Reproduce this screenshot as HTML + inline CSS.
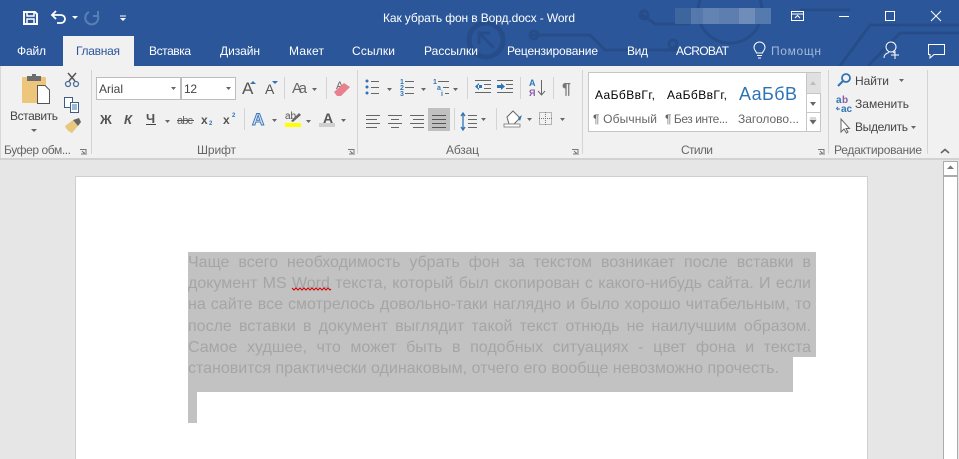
<!DOCTYPE html>
<html lang="ru"><head><meta charset="utf-8"><title>Word</title>
<style>
html,body{margin:0;padding:0;background:#e6e6e6}
#w{position:relative;width:959px;height:459px;overflow:hidden;background:#e6e6e6}
svg{position:absolute;left:0;top:0}
svg text{font-family:"Liberation Sans","Noto Sans CJK SC",sans-serif}
.t{font-size:12px;fill:#fff}
.r{font-size:12px;fill:#444}
.g{font-size:12px;fill:#666}
.d{position:absolute;left:188px;width:623px;height:21px;font:16px/21px "Liberation Sans",sans-serif;color:#a5a5a5;text-align:justify;text-align-last:justify;white-space:nowrap}
.sel{position:absolute;background:#c2c2c2}
</style></head><body><div id="w">
<svg width="959" height="459" viewBox="0 0 959 459">
<rect width="959" height="66" fill="#2b579a"/>
<g fill="none" stroke="#264d8a" stroke-width="3">
<circle cx="486" cy="40" r="17" stroke-width="5"/><path d="M494 48L480 34M479 44V33H490"/>
<path d="M530 35H590L605 50H680M640 13L655 24H690M700 0a32 32 0 1 0 60 0"/><circle cx="534" cy="35" r="4"/><circle cx="673" cy="44" r="4"/><circle cx="644" cy="15" r="4"/>
<path d="M840 66L870 25H959M868 66L900 33H959M800 10H850"/>
</g>
<rect x="63" y="36" width="71" height="30" fill="#f1f1f1"/>
<rect y="66" width="959" height="92" fill="#f1f1f1"/>
<rect y="158" width="959" height="2" fill="#d2d2d2"/>
<rect x="0" y="66" width="1" height="92" fill="#d8d8d8"/>
<!-- QAT -->
<g fill="none" stroke="#fff" stroke-width="2"><path d="M24 12H35L37 14V24H24Z"/><path d="M27 12V16H34V12M27 24V19H34V24" stroke-width="1.5"/>
<path d="M53 15H61A4 4 0 0 1 61 23H57M56 11L52 15L56 19" stroke-width="1.8"/>
<path d="M89 12A6.5 6.5 0 1 0 98 16M98 11V16H93" stroke="#5a7fb6" stroke-width="2"/>
<path d="M120 16H126" stroke-width="1"/></g>
<path d="M72 16H78L75 19ZM120 18H126L123 21Z" fill="#fff"/>
<text x="383" y="22" class="t" textLength="192" font-size="13">Как убрать фон в Ворд.docx - Word</text>
<rect x="675" y="8" width="16" height="16" fill="#3d669f"/><rect x="691" y="8" width="16" height="16" fill="#5a7dae" opacity=".9"/><rect x="703" y="8" width="64" height="16" fill="#5d7fb0"/><rect x="739" y="8" width="16" height="16" fill="#6f8db8"/>
<rect x="703" y="8" width="16" height="16" fill="#6383b2"/><rect x="755" y="8" width="16" height="16" fill="#557aad"/>
<!-- window controls -->
<g fill="none" stroke="#fff" stroke-width="1"><rect x="791.500" y="11.500" width="12" height="9"/><path d="M791 14H804M795 18L797.500 15.500L800 18"/><path d="M839 16.500H849"/><rect x="885.500" y="11.500" width="9" height="9"/><path d="M931 11L941 21M941 11L931 21"/></g>
<!-- tabs -->
<g class="tabs">
<text x="17" y="55" class="t" textLength="29">Файл</text>
<text x="76" y="55" font-size="12" fill="#2b579a" textLength="44">Главная</text>
<text x="149" y="55" class="t" textLength="42">Вставка</text>
<text x="220" y="55" class="t" textLength="40">Дизайн</text>
<text x="289" y="55" class="t" textLength="35">Макет</text>
<text x="352" y="55" class="t" textLength="43">Ссылки</text>
<text x="424" y="55" class="t" textLength="54">Рассылки</text>
<text x="507" y="55" class="t" textLength="91">Рецензирование</text>
<text x="627" y="55" class="t" textLength="21">Вид</text>
<text x="676" y="55" class="t" textLength="53">ACROBAT</text>
<text x="771" y="55" font-size="12" fill="#a5bad8" textLength="50">Помощн</text>
</g>
<g fill="none" stroke="#fff" stroke-width="1"><path d="M757 55.500H762M758 58H761M756.500 53C756 51 754 50 754 47.500A5.500 5.500 0 0 1 765 47.500C765 50 763 51 762.500 53Z"/>
<circle cx="891" cy="47" r="5"/><path d="M884 58C884 54 887 53 889 52.500M893 52.500L895 53"/><path d="M891 55H899M895 51V59"/><path d="M928.500 44.500H944.500V54.500H934L930 58V54.500H928.500Z"/></g>
<!-- separators -->
<g fill="#d4d4d4"><rect x="91" y="70" width="1" height="84"/><rect x="357" y="70" width="1" height="84"/><rect x="582" y="70" width="1" height="84"/><rect x="828" y="70" width="1" height="84"/><rect x="927" y="70" width="1" height="84"/>
<rect x="284" y="77" width="1" height="22"/><rect x="326" y="77" width="1" height="22"/><rect x="244" y="108" width="1" height="22"/><rect x="467" y="77" width="1" height="22"/><rect x="520" y="77" width="1" height="22"/><rect x="553" y="77" width="1" height="22"/><rect x="454" y="108" width="1" height="22"/><rect x="496" y="108" width="1" height="22"/></g>
<!-- Clipboard -->
<rect x="22" y="77" width="24" height="26" rx="1" fill="#edc67b"/><rect x="27" y="76" width="14" height="5" fill="#6d6d6d"/><rect x="32" y="74" width="4" height="4" fill="#6d6d6d"/>
<path d="M37.500 85.500H45L49.500 90V103.500H37.500Z" fill="#fff" stroke="#555"/>
<text x="10" y="120" class="r" textLength="48">Вставить</text><path d="M31 129H37L34 132Z" fill="#666"/>
<g fill="none" stroke="#4a6f9c" stroke-width="1.300"><circle cx="68" cy="84" r="2.500"/><circle cx="76" cy="84" r="2.500"/></g><path d="M69 81L76 73M75 81L68 73" stroke="#555" stroke-width="1.500"/>
<g fill="#fff" stroke="#3f5d80"><rect x="64.500" y="97.500" width="8" height="10"/><rect x="70.500" y="102.500" width="8" height="10"/></g><path d="M72 105H77M72 107H77M72 109H77" stroke="#2f74b5"/>
<path d="M65 126L73 120L78 126L72 133C69 132 66 129 65 126Z" fill="#e9c77f"/><path d="M73 120L79 118L81 122L78 126Z" fill="#666"/>
<text x="4" y="154" class="g" textLength="67">Буфер обм...</text>
<text x="197" y="154" class="g" textLength="39">Шрифт</text><text x="446" y="154" class="g" textLength="33">Абзац</text><text x="681" y="154" class="g" textLength="32">Стили</text><text x="834" y="154" class="g" textLength="88">Редактирование</text>
<g fill="none" stroke="#777"><path d="M80 149.500H86V155M85 154L82 151M81 154H84V152"/><path d="M348 149.500H354V155M353 154L350 151M349 154H352V152"/><path d="M572 149.500H578V155M577 154L574 151M573 154H576V152"/><path d="M818 149.500H824V155M823 154L820 151M819 154H822V152"/></g>
<path d="M941 153L945 149.500L949 153" fill="none" stroke="#666" stroke-width="1.600"/>
<!-- Font boxes -->
<rect x="96.500" y="77.500" width="84" height="22" fill="#fff" stroke="#bdbdbd"/><rect x="181.500" y="77.500" width="54" height="22" fill="#fff" stroke="#bdbdbd"/>
<text x="99" y="93" class="r" textLength="24">Arial</text><text x="184" y="93" class="r" textLength="13">12</text>
<g fill="#666"><path d="M171 87H176L173.500 90ZM226 87H231L228.500 90ZM312 88H317L314.500 91ZM165 120H170L167.500 123ZM272 119H277L274.500 122ZM306 120H311L308.500 123ZM341 119H346L343.500 122ZM387 88H392L389.500 91ZM421 88H426L423.500 91ZM453 88H458L455.500 91ZM481 118H486L483.500 121ZM527 118H532L529.500 121ZM560 118H565L562.500 121ZM899 79H904L901.500 82ZM911 126H916L913.500 129Z"/></g>
<text x="242" y="94" font-size="17" fill="#555">A</text><text x="265" y="94" font-size="14" fill="#555">A</text>
<path d="M250 84L253 81L256 84ZM272 81H278L275 84Z" fill="#2f74b5"/>
<text x="292" y="93" font-size="15" fill="#666" textLength="15">Aa</text>
<text x="336" y="89" font-size="11" fill="#666">A</text><path d="M334 92L344 83L350 87L341 96H337Z" fill="#e8808e"/>
<g fill="#555" font-weight="bold" font-size="13"><text x="100" y="124" textLength="13">Ж</text><text x="124" y="124" font-style="italic">К</text><text x="146" y="123">Ч</text><text x="201" y="124" font-size="12">x</text><text x="223" y="124" font-size="12">x</text></g>
<rect x="146" y="124" width="10" height="1" fill="#444"/>
<text x="177" y="124" font-size="11" fill="#666" textLength="16">abc</text><rect x="177" y="120" width="17" height="1" fill="#555"/>
<text x="209" y="125" font-size="6" fill="#2f74b5" font-weight="bold">2</text><text x="232" y="117" font-size="6" fill="#2f74b5" font-weight="bold">2</text>
<text x="252" y="125" font-size="17" font-weight="bold" fill="#dbe8f6" stroke="#3f79b8" stroke-width="1">A</text>
<text x="285" y="119" font-size="10" fill="#555">ab</text><path d="M291 121L299 113L301 115L293 122Z" fill="#666"/><rect x="285" y="123" width="16" height="4" fill="#ffff00"/>
<text x="323" y="123" font-size="14" fill="#555" font-weight="bold">A</text><rect x="319" y="123" width="16" height="4" fill="#cfcfcf"/>
<!-- lists -->
<g fill="#2f74b5"><circle cx="367" cy="81" r="1.500"/><circle cx="367" cy="87" r="1.500"/><circle cx="367" cy="93" r="1.500"/></g>
<g stroke="#666"><path d="M371 81.500H379M371 87.500H379M371 93.500H379M405 81.500H414M405 87.500H414M405 93.500H414M438 81.500H449M443 87.500H449M445 93.500H449"/>
<path d="M366 115.500H380M366 119.500H377M366 123.500H380M366 127.500H377M388 115.500H402M391 119.500H399M388 123.500H402M391 127.500H399M410 115.500H424M413 119.500H424M410 123.500H424M413 127.500H424"/>
<path d="M475 80.500H491M484 84.500H491M484 88.500H491M475 92.500H491M497 80.500H513M506 84.500H513M506 88.500H513M497 92.500H513"/></g>
<g font-size="7" fill="#2f74b5" font-weight="bold"><text x="400" y="84">1</text><text x="400" y="90">2</text><text x="400" y="96">3</text><text x="433" y="84">1</text><text x="437" y="90">a</text><text x="441" y="96">i</text></g>
<path d="M475 86.500L479 83V90ZM482 85H478V88H482ZM505 86.500L501 83V90ZM497 85H501V88H497Z" fill="#2f74b5"/>
<text x="529" y="86" font-size="9" font-weight="bold" fill="#2f74b5">А</text><text x="529" y="96" font-size="9" font-weight="bold" fill="#8a5aa8">Я</text><path d="M541.500 80V95M538 91L541.500 95L545 91" fill="none" stroke="#666"/>
<text x="562" y="94" font-size="16" fill="#777" font-weight="bold" textLength="10">¶</text>
<!-- paragraph align -->
<rect x="428" y="108" width="22" height="23" fill="#c0c0c0"/><path d="M432 115.500H446M432 119.500H446M432 123.500H446M432 127.500H446" stroke="#555"/>
<path d="M463 114V129M461 116L463 113L465 116M461 127L463 130L465 127" fill="none" stroke="#2f74b5" stroke-width="1.300"/><path d="M468 115.500H477M468 119.500H477M468 123.500H477M468 127.500H477" stroke="#666"/>
<path d="M507 117L513 111L520 118L514 124H509Z" fill="#fff" stroke="#666"/><path d="M518 118L522 115L520 121Z" fill="#2f74b5"/><rect x="504" y="124" width="16" height="3" fill="#fff" stroke="#777" stroke-width=".8"/>
<rect x="539.500" y="112.500" width="12" height="12" fill="none" stroke="#777" stroke-dasharray="1 1"/><path d="M545.500 112V125M539 118.500H552" stroke="#777" stroke-dasharray="1 1"/>
<!-- Styles gallery -->
<rect x="588.500" y="72.500" width="232" height="59" fill="#fff" stroke="#c6c6c6"/>
<text x="595" y="99" font-size="12" fill="#000" textLength="60">АаБбВвГг,</text>
<text x="667" y="99" font-size="12" fill="#000" textLength="60">АаБбВвГг,</text>
<text x="739" y="100" font-size="18" fill="#2e74b5" textLength="68">АаБбВв</text><rect x="798" y="80" width="8" height="30" fill="#fff"/>
<rect x="807" y="73" width="14" height="20" fill="#e0e0e0"/>
<g fill="none" stroke="#c6c6c6"><path d="M806.500 73V131M807 93.500H821M807 112.500H821"/></g>
<path d="M810 85H816L813 81Z" fill="#bdbdbd"/><path d="M810 102H816L813 106Z" fill="#666"/><path d="M810 120H816L813 124ZM810 118H816" fill="#666" stroke="#666" stroke-width=".6"/>
<text x="593" y="123" class="g" textLength="64">¶ Обычный</text><text x="665" y="123" class="g" textLength="63">¶ Без инте...</text><text x="738" y="123" class="g" textLength="61">Заголово...</text>
<!-- Editing -->
<circle cx="846" cy="78" r="4" fill="none" stroke="#2f74b5" stroke-width="1.800"/><path d="M843 81L838 86" stroke="#2f74b5" stroke-width="2"/>
<text x="855" y="85" class="r" textLength="34">Найти</text>
<text x="836" y="103" font-size="10" font-weight="bold" fill="#2f74b5">a</text><text x="842" y="103" font-size="10" font-weight="bold" fill="#8a5aa8">b</text><text x="841" y="112" font-size="10" font-weight="bold" fill="#2f74b5">ac</text><path d="M837 109H840M838 107L836.500 108.500L838 110" stroke="#2f74b5" fill="none"/>
<text x="855" y="108" class="r" textLength="54">Заменить</text>
<path d="M841 119V132L844 129L846.500 133L848 132L846 128.500H849.500Z" fill="#fff" stroke="#666"/>
<text x="855" y="131" class="r" textLength="53">Выделить</text>
<!-- page -->
<rect x="75.500" y="176.500" width="792" height="290" fill="#fff" stroke="#cfcfcf"/>
<!-- scrollbar -->
<rect x="943.500" y="161.500" width="14" height="300" fill="#fff" stroke="#ababab"/>
<rect x="944" y="175" width="13" height="2" fill="#ababab"/>
<path d="M947 169H954L950.500 165.500Z" fill="#777"/>
</svg>
<div class="sel" style="left:188px;top:252px;width:628px;height:105px"></div>
<div class="sel" style="left:188px;top:357px;width:605px;height:35px"></div>
<div class="sel" style="left:188px;top:392px;width:9px;height:31px"></div>
<div class="d" style="top:252px">Чаще всего необходимость убрать фон за текстом возникает после вставки в</div>
<div class="d" style="top:273px">документ MS Word текста, который был скопирован с какого-нибудь сайта. И если</div>
<div class="d" style="top:294px">на сайте все смотрелось довольно-таки наглядно и было хорошо читабельным, то</div>
<div class="d" style="top:316px">после вставки в документ выглядит такой текст отнюдь не наилучшим образом.</div>
<div class="d" style="top:337px">Самое худшее, что может быть в подобных ситуациях - цвет фона и текста</div>
<div class="d" style="top:358px;text-align-last:left">становится практически одинаковым, отчего его вообще невозможно прочесть.</div>
<svg width="959" height="459" viewBox="0 0 959 459"><path d="M292 288L294 290L296 288L298 290L300 288L302 290L304 288L306 290L308 288L310 290L312 288L314 290L316 288L318 290L320 288L322 290L324 288L326 290L328 288L330 290L331 289" fill="none" stroke="#d00000" stroke-width="1"/></svg>
</div></body></html>
